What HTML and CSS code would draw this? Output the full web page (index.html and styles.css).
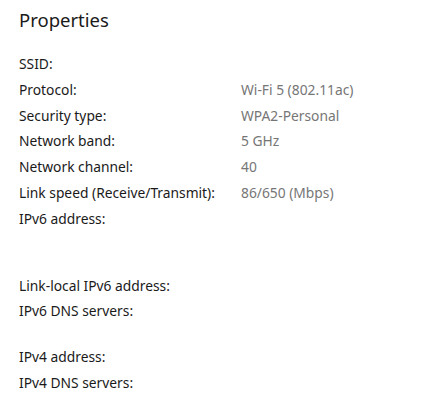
FILE: index.html
```html
<!DOCTYPE html>
<html lang="en">
<head>
<meta charset="utf-8">
<title>Properties</title>
<link rel="stylesheet" href="styles.css">
</head>
<body>
<main class="panel">
  <h1 class="title">Properties</h1>
  <dl class="props">
    <dt>SSID:</dt><dd></dd>
    <dt>Protocol:</dt><dd>Wi-Fi 5 (802.11ac)</dd>
    <dt>Security type:</dt><dd>WPA2-Personal</dd>
    <dt>Network band:</dt><dd>5 GHz</dd>
    <dt>Network channel:</dt><dd>40</dd>
    <dt>Link speed (Receive/Transmit):</dt><dd>86/650 (Mbps)</dd>
    <dt>IPv6 address:</dt><dd class="lines3"></dd>
    <dt>Link-local IPv6 address:</dt><dd></dd>
    <dt>IPv6 DNS servers:</dt><dd class="lines2"></dd>
    <dt>IPv4 address:</dt><dd></dd>
    <dt>IPv4 DNS servers:</dt><dd class="lines2"></dd>
  </dl>
</main>
</body>
</html>
```
FILE: styles.css
```css
html, body {
  margin: 0;
  padding: 0;
  background: #ffffff;
}
body {
  font-family: "Noto Sans", "Open Sans", sans-serif;
  color: #1a1a1a;
}
.panel {
  padding: 6px 0 0 19px;
}
.title {
  margin: 0;
  font-size: 18.5px;
  font-weight: 400;
  line-height: 28px;
  color: #1a1a1a;
}
.props {
  margin: 20px 0 0 0;
  display: grid;
  grid-template-columns: 222px 1fr;
  row-gap: 5.8px;
  font-size: 13.8px;
  line-height: 20px;
}
.props dt {
  margin: 0;
  color: #1a1a1a;
}
.props dd {
  margin: 0;
  min-height: 20px;
  color: #767676;
}
.props dd.lines2 {
  min-height: 40px;
}
.props dd.lines3 {
  min-height: 61px;
}
```
